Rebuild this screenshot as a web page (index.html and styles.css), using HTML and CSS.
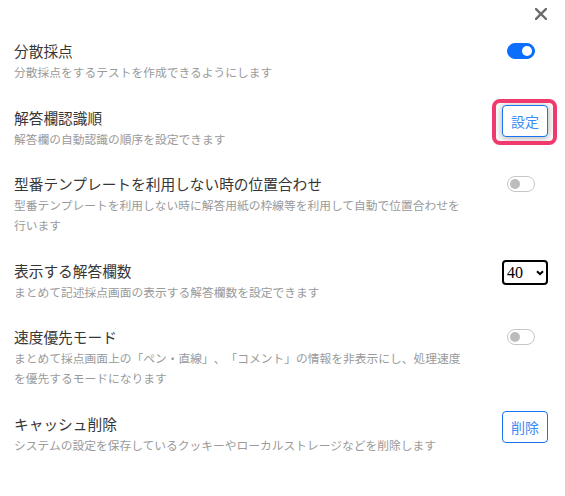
FILE: index.html
```html
<!DOCTYPE html>
<html lang="ja">
<head>
<meta charset="utf-8">
<title>設定</title>
<link rel="stylesheet" href="styles.css">
</head>
<body>
<div class="modal">
  <div class="header">
    <button class="close" aria-label="閉じる">
      <svg width="12" height="12" viewBox="0 0 12 12"><path d="M1 1L11 11M11 1L1 11" stroke="#6b6b6b" stroke-width="2.4" stroke-linecap="square"/></svg>
    </button>
  </div>
  <div class="rows">
    <div class="row">
      <div class="text">
        <div class="title">分散採点</div>
        <div class="desc">分散採点をするテストを作成できるようにします</div>
      </div>
      <div class="control"><span class="switch on"></span></div>
    </div>
    <div class="row">
      <div class="text">
        <div class="title">解答欄認識順</div>
        <div class="desc">解答欄の自動認識の順序を設定できます</div>
      </div>
      <div class="control"><button class="btn highlighted">設定</button></div>
    </div>
    <div class="row">
      <div class="text">
        <div class="title">型番テンプレートを利用しない時の位置合わせ</div>
        <div class="desc">型番テンプレートを利用しない時に解答用紙の枠線等を利用して自動で位置合わせを行います</div>
      </div>
      <div class="control"><span class="switch"></span></div>
    </div>
    <div class="row">
      <div class="text">
        <div class="title">表示する解答欄数</div>
        <div class="desc">まとめて記述採点画面の表示する解答欄数を設定できます</div>
      </div>
      <div class="control">
        <div class="select-wrap">
          <select class="select"><option>40</option></select>
          <svg class="chev" width="8" height="6" viewBox="0 0 8 6"><path d="M1 1.2L4 4.2L7 1.2" fill="none" stroke="#000" stroke-width="2"/></svg>
        </div>
      </div>
    </div>
    <div class="row">
      <div class="text">
        <div class="title">速度優先モード</div>
        <div class="desc">まとめて採点画面上の「ペン・直線」、「コメント」の情報を非表示にし、処理速度を優先するモードになります</div>
      </div>
      <div class="control"><span class="switch"></span></div>
    </div>
    <div class="row">
      <div class="text">
        <div class="title">キャッシュ削除</div>
        <div class="desc">システムの設定を保存しているクッキーやローカルストレージなどを削除します</div>
      </div>
      <div class="control"><button class="btn">削除</button></div>
    </div>
  </div>
</div>
</body>
</html>
```
FILE: styles.css
```css
html, body {
  margin: 0;
  padding: 0;
  background: #fff;
}
body {
  font-family: "Noto Sans CJK JP", "Noto Sans", sans-serif;
  color: #2b2b2b;
  text-spacing-trim: space-all;
}
.modal {
  padding: 0 17px 0 14px;
}
.header {
  height: 40px;
  display: flex;
  justify-content: flex-end;
  align-items: flex-start;
  padding-top: 8px;
  box-sizing: border-box;
}
.close {
  border: 0;
  background: none;
  padding: 0;
  margin-right: 1px;
  width: 12px;
  height: 12px;
  display: block;
}
.close svg { display: block; }
.rows {
  display: flex;
  flex-direction: column;
  gap: 24.6px;
}
.row {
  display: flex;
  justify-content: space-between;
  align-items: flex-start;
  gap: 36px;
}
.text {
  flex: 1;
  min-width: 0;
}
.title {
  font-size: 14.7px;
  line-height: 22px;
  color: #363636;
}
.desc {
  font-size: 11.76px;
  line-height: 20px;
  color: #9a9a9a;
}
.control {
  width: 46px;
  flex: none;
}
.switch {
  display: block;
  position: relative;
  width: 28px;
  height: 16px;
  box-sizing: border-box;
  border-radius: 8px;
  border: 1px solid #c6c6c6;
  background: #fff;
  margin: 3px 0 0 5px;
}
.switch::after {
  content: "";
  position: absolute;
  top: 2px;
  left: 2px;
  width: 10px;
  height: 10px;
  border-radius: 50%;
  background: #bcbcbc;
}
.switch.on {
  background: #0d6efd;
  border-color: #0d6efd;
}
.switch.on::after {
  left: auto;
  right: 2px;
  background: #fff;
}
.btn {
  position: relative;
  display: block;
  width: 46px;
  height: 32px;
  margin-top: -2px;
  padding: 0;
  box-sizing: border-box;
  border: 1px solid #1a74f0;
  border-radius: 4px;
  background: #fff;
  color: #3a8cf6;
  font-family: "Noto Sans CJK JP", sans-serif;
  font-size: 14px;
  line-height: 1;
}
.btn.highlighted {
  box-shadow: 0 1px 7px 1px rgba(0, 0, 0, 0.28);
}
.btn.highlighted::after {
  content: "";
  position: absolute;
  top: -7px;
  bottom: -9px;
  left: -11px;
  right: -10px;
  border: 4px solid #f03a6d;
  border-radius: 8px;
  pointer-events: none;
}
.select-wrap {
  position: relative;
  width: 46px;
  height: 25px;
}
.select {
  appearance: none;
  -webkit-appearance: none;
  display: block;
  width: 46px;
  height: 25px;
  box-sizing: border-box;
  border: 2px solid #000;
  border-radius: 4px;
  background: #fff;
  color: #000;
  font-family: "Liberation Serif", serif;
  font-size: 16px;
  padding: 0 0 0 3px;
  margin: 0;
}
.chev {
  position: absolute;
  right: 4px;
  top: 10px;
  pointer-events: none;
}
```
